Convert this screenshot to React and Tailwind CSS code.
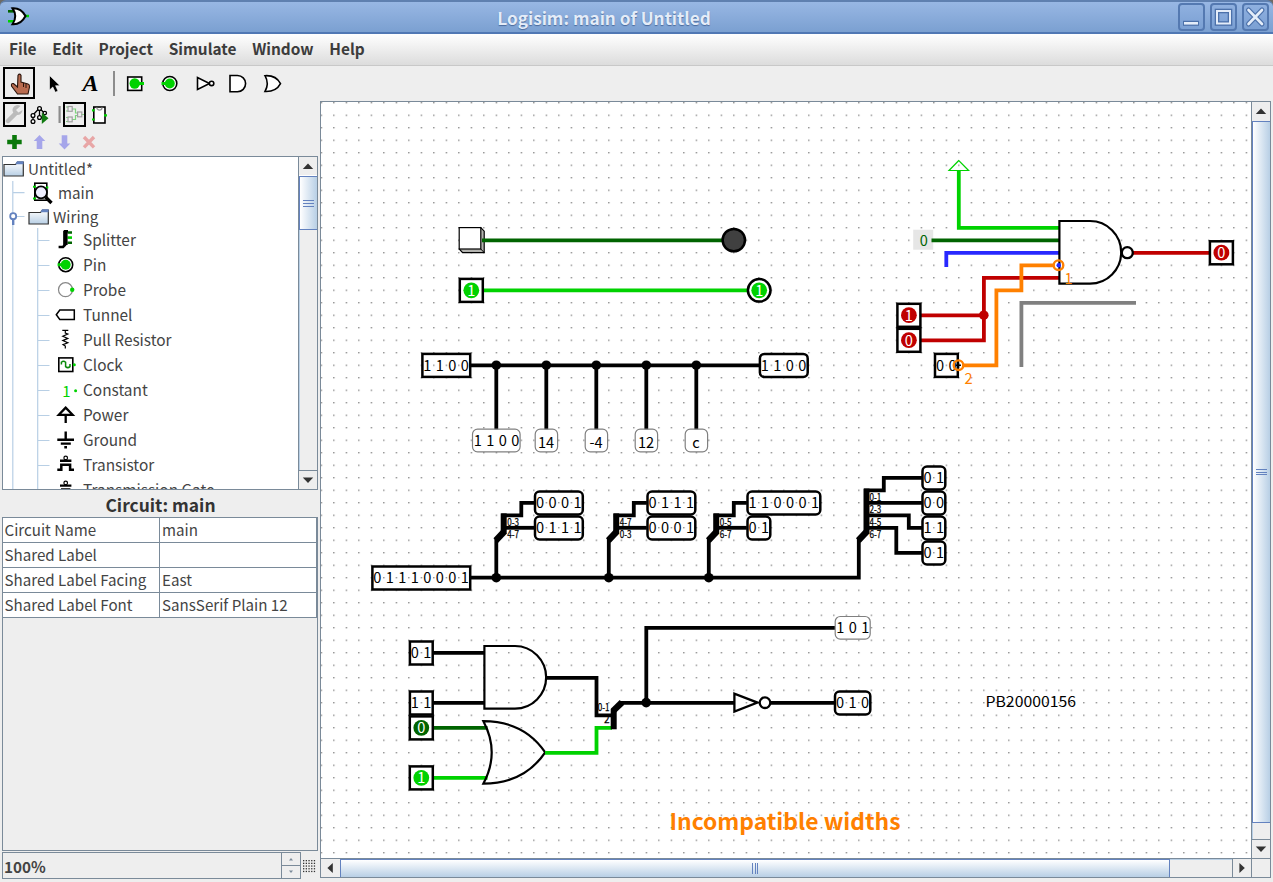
import React from 'react';

const G = '#00d200';
const DG = '#006400';
const RED = '#c00000';
const ORANGE = '#ff8000';

/* ---------- circuit primitives ---------- */

function Wire({ d, c = '#000', w = 3.8 }) {
  return <path d={d} fill="none" stroke={c} strokeWidth={w} strokeLinejoin="miter" />;
}

function Dot({ x, y, c = '#000' }) {
  return <circle cx={x} cy={y} r={4.8} fill={c} />;
}

function Bits({ x, y, v }) {
  return v.split('').map((ch, i) => (
    <text key={i} x={x + i * 12.5} y={y + 5.3} fontSize="14.6" textAnchor="middle">{ch}</text>
  ));
}

/* Multi-bit pin: square corners for inputs, rounded for outputs. */
function Bus({ x, y, v, out }) {
  return (
    <g>
      <rect x={x + 1.2} y={y - 11.3} width={v.length * 12.5 - 2.2} height={23} rx={out ? 4.5 : 0} fill="none" stroke="#000" strokeWidth="2.5" />
      <Bits x={x + 6.2} y={y} v={v} />
    </g>
  );
}

function Pin({ x, y, v, c, out }) {
  return (
    <g>
      {out ? (
        <circle cx={x} cy={y} r="11.3" fill="none" stroke="#000" strokeWidth="2.5" />
      ) : (
        <rect x={x - 11.5} y={y - 11.4} width="23" height="23" fill="none" stroke="#000" strokeWidth="2.5" />
      )}
      <circle cx={x} cy={y} r="7.9" fill={c} />
      <text x={x} y={y + 5.4} fontSize="14.6" textAnchor="middle" fill="#fff">{v}</text>
    </g>
  );
}

function Probe({ x, y, w, children }) {
  return (
    <g>
      <rect x={x} y={y} width={w} height="22.6" rx="5" fill="#fff" stroke="#808080" strokeWidth="1.2" />
      {children}
    </g>
  );
}

function Tiny({ x, y, children }) {
  return <text x={x} y={y} fontSize="10" textLength={children.length > 1 ? 11.8 : undefined} lengthAdjust="spacingAndGlyphs" stroke="#000" strokeWidth=".25">{children}</text>;
}

function TwoWay({ x, labels }) {
  return (
    <g>
      <Wire d={`M${x} 577.7V538.5`} />
      <Wire d={`M${x - 0.5} 540.5L${x + 8} 531.5`} w={6.5} />
      <Wire d={`M${x + 7.4} 534V513.4`} w={6} />
      <Wire d={`M${x + 5} 515.3H${x + 25}V502.8H${x + 38}`} />
      <Wire d={`M${x + 8} 527.8H${x + 38}`} />
      <Tiny x={x + 11} y={525.8}>{labels[0]}</Tiny>
      <Tiny x={x + 11} y={538.4}>{labels[1]}</Tiny>
      <Dot x={x} y={577.7} />
    </g>
  );
}

function Circuit() {
  return (
    <svg className="block h-[756px] w-[930px]" viewBox="321 102 930 756" fontFamily='"Noto Sans CJK SC","Noto Sans",sans-serif'>
      <defs>
        <pattern id="grid" patternUnits="userSpaceOnUse" x="320.7" y="102.1" width="12.5" height="12.5">
          <rect width="1.3" height="1.3" fill="#777" />
        </pattern>
      </defs>
      <rect x="321" y="102" width="930" height="757" fill="#fff" />
      <rect x="321" y="102" width="930" height="757" fill="url(#grid)" />

      {/* button to LED, pin to pin */}
      <path d="M480.8 227.6l3.4 3.6v21.4h-21.6l-3.4-3.6z" fill="#b4b4b0" stroke="#000" strokeWidth="1.2" />
      <path d="M480.8 249l3.4 3.6" stroke="#000" />
      <rect x="459.2" y="227.6" width="21.6" height="21.4" fill="#fff" stroke="#000" strokeWidth="1.2" />
      <Wire d="M482 240.3H723" c={DG} />
      <circle cx="733.8" cy="240.1" r="11.2" fill="#404040" stroke="#000" strokeWidth="2.5" />
      <Wire d="M482 290.4H748" c={G} />
      <Pin x={471.3} y={290.3} v="1" c={G} />
      <Pin x={759.2} y={290.3} v="1" c={G} out />

      {/* probe row */}
      <Wire d="M470 365.4H759" />
      {[496.3, 546.3, 596.3, 646.3, 696.3].map((x) => (
        <g key={x}>
          <Wire d={`M${x} 365.3V430`} />
          <Dot x={x} y={365.2} />
        </g>
      ))}
      <Bus x={421.2} y={365.2} v="1100" />
      <Bus x={758.7} y={365.2} v="1100" out />
      <Probe x={472.5} y={429.2} w={47.6}><Bits x={477.8} y={440.2} v="1100" /></Probe>
      {[['14', 535.2], ['-4', 585.2], ['12', 635.2], ['c', 685.2]].map(([t, x]) => (
        <Probe key={t} x={x} y={429.2} w={22.4}>
          <text x={x + 10.8} y="448" fontSize="14.6" textAnchor="middle">{t}</text>
        </Probe>
      ))}

      {/* splitters */}
      <Wire d="M470 577.7H858.8V538.5" />
      <Bus x={371.2} y={577.8} v="01110001" />
      <TwoWay x={496.3} labels={['0-3', '4-7']} />
      <TwoWay x={608.8} labels={['4-7', '0-3']} />
      <TwoWay x={708.8} labels={['0-5', '6-7']} />
      <Bus x={533.8} y={502.8} v="0001" out />
      <Bus x={533.8} y={527.8} v="0111" out />
      <Bus x={646.3} y={502.8} v="0111" out />
      <Bus x={646.3} y={527.8} v="0001" out />
      <Bus x={746.3} y={502.8} v="110001" out />
      <Bus x={746.3} y={527.8} v="01" out />
      <Wire d="M858.3 540.5L866.8 531.5" w={6.5} />
      <Wire d="M866.5 534V488.6" w={6} />
      <Wire d="M864 490.4H883.8V477.8H922" />
      <Wire d="M867 502.8H922" />
      <Wire d="M867 515.4H908.8V527.8H922" />
      <Wire d="M867 527.8H896.3V552.9H922" />
      <Tiny x={869.5} y={500.8}>0-1</Tiny>
      <Tiny x={869.5} y={513.3}>2-3</Tiny>
      <Tiny x={869.5} y={525.8}>4-5</Tiny>
      <Tiny x={869.5} y={538.3}>6-7</Tiny>
      <Bus x={921.3} y={477.8} v="01" out />
      <Bus x={921.3} y={502.8} v="00" out />
      <Bus x={921.3} y={527.8} v="11" out />
      <Bus x={921.3} y={552.8} v="01" out />

      {/* AND / OR / NOT */}
      <Wire d="M432 652.8H484M432 702.8H484" />
      <Wire d="M432 727.8H487.5" c={DG} />
      <Wire d="M432 777.8H487.5" c={G} />
      <Bus x={408.7} y={652.8} v="01" />
      <Bus x={408.7} y={702.8} v="11" />
      <Pin x={421.3} y={727.8} v="0" c={DG} />
      <Pin x={421.3} y={777.8} v="1" c={G} />
      <path d="M484.4 646H515A31.2 31.3 0 0 1 515 708.6H484.4Z" fill="none" stroke="#000" strokeWidth="2.2" />
      <path d="M483.4 721.2Q524 721.2 545.2 752.4Q524 783.6 483.4 783.6Q500 752.4 483.4 721.2Z" fill="none" stroke="#000" strokeWidth="2.2" />
      <Wire d="M546 677.8H596.5V715.4H612" />
      <Wire d="M545 752.8H596.5V727.8H612" c={G} />
      <Wire d="M613.7 729.3V709" w={6} />
      <Wire d="M613 711L622 702.3" w={6.5} />
      <Wire d="M620 702.8H734M646.3 702.8V627.8H835M771 702.8H835" />
      <Dot x={646.2} y={702.6} />
      <Tiny x={597.8} y={711}>0-1</Tiny>
      <Tiny x={604} y={723}>2</Tiny>
      <path d="M734.4 693.6V711.6L757.5 702.6Z" fill="none" stroke="#000" strokeWidth="2.3" />
      <circle cx="765" cy="702.7" r="5.3" fill="#fff" stroke="#000" strokeWidth="2.3" />
      <Bus x={833.8} y={702.8} v="010" out />
      <Probe x={835.2} y={616.5} w={35}><Bits x={840.3} y={628} v="101" /></Probe>

      {/* NAND with mixed inputs */}
      <path d="M958.8 160.5L949 170.5H968.6Z" fill="none" stroke={G} strokeWidth="1.2" />
      <Wire d="M958.8 170.5V227.8H1060" c={G} />
      <rect x="913.2" y="229.7" width="20" height="20" fill="#e6e6e6" />
      <text x="923.7" y="245.7" fontSize="14.6" textAnchor="middle" fill={DG}>0</text>
      <Wire d="M931.5 240.3H1060" c={DG} />
      <Wire d="M946.3 267V252.8H1060" c="#2828ff" />
      <Wire d="M1060 277.8H983.9V340.4H920M920 315.4H984" c={RED} />
      <Dot x={983.8} y={315.2} c={RED} />
      <Wire d="M1132 252.9H1210" c={RED} />
      <Pin x={908.9} y={315.2} v="1" c={RED} />
      <Pin x={908.9} y={340.2} v="0" c={RED} />
      <Pin x={1221.4} y={252.7} v="0" c={RED} />
      <path d="M1059.4 221H1090A31.2 31.3 0 0 1 1090 283.6H1059.4Z" fill="none" stroke="#000" strokeWidth="2.2" />
      <circle cx="1127.3" cy="252.7" r="5.5" fill="#fff" stroke="#000" strokeWidth="2.3" />
      <Bus x={933.8} y={365.2} v="00" />
      <Wire d="M1054 265.3H1021.4V290.4H996.4V365.4H963" c={ORANGE} />
      <circle cx="1058.7" cy="265.2" r="2.2" fill="#2828ff" />
      <circle cx="1058.5" cy="265.2" r="4.8" fill="none" stroke={ORANGE} strokeWidth="2.4" />
      <path d="M958.5 362.5V368M956 365.3H961" stroke="#000" strokeWidth="1.6" />
      <circle cx="958.5" cy="365.2" r="4.8" fill="none" stroke={ORANGE} strokeWidth="2.4" />
      <text x="1068.5" y="284" fontSize="14.6" textAnchor="middle" fill={ORANGE}>1</text>
      <text x="968.5" y="384.4" fontSize="14.6" textAnchor="middle" fill={ORANGE}>2</text>
      <Wire d="M1021.4 367V302.8H1136" c="#808080" />

      <text x="985.5" y="707" fontSize="14.6" textLength="90.5" lengthAdjust="spacingAndGlyphs">PB20000156</text>
      <text x="669.5" y="830" fontSize="22.2" fontWeight="700" fill={ORANGE} textLength="231" lengthAdjust="spacingAndGlyphs">Incompatible widths</text>
    </svg>
  );
}

/* ---------- chrome ---------- */

function WinButton({ children }) {
  return (
    <div className="h-[28px] w-[27px] rounded-[4px] border-2 border-[#5479b1] bg-gradient-to-b from-[#8fb0df] to-[#7ba0d3]">
      <svg viewBox="0 0 23 24" className="block h-[24px] w-[23px]">{children}</svg>
    </div>
  );
}

function TitleBar() {
  return (
    <div className="bg-[#6d6a66]">
      <div className="flex h-[34px] items-center rounded-t-[6px] border-t-2 border-b-2 border-t-[#5f80b0] border-b-[#5078b4] bg-gradient-to-b from-[#98b7e4] to-[#7ba0d1]">
        <svg viewBox="4 4 30 28" className="h-[28px] w-[30px] shrink-0 ml-1">
          <path d="M8 12.3H15" stroke={DG} strokeWidth="2.6" />
          <path d="M8 22.3H15M25 17H29" stroke={G} strokeWidth="2.6" />
          <path d="M12.5 9.3Q21 8.8 25.5 17Q21 25.8 12.5 25.3Q18 17 12.5 9.3Z" fill="#fff" stroke="#000" strokeWidth="2" />
        </svg>
        <div className="ml-[34px] w-[1072px] pt-px text-center text-[17.2px] font-bold text-[#e4ecf8] [text-shadow:0_1px_1px_#4a6a9c]">Logisim: main of Untitled</div>
        <div className="ml-auto mr-[4px] flex gap-[5px]">
          <WinButton><path d="M3 18.3H19" stroke="#4c71aa" strokeWidth="5" /><path d="M4 18.3H18" stroke="#e4edf9" strokeWidth="2.6" /></WinButton>
          <WinButton><rect x="5" y="6" width="13" height="12.5" fill="none" stroke="#4c71aa" strokeWidth="4.6" /><rect x="5" y="6" width="13" height="12.5" fill="none" stroke="#e4edf9" strokeWidth="2" /></WinButton>
          <WinButton><path d="M4.5 5L18 19M18 5L4.5 19" stroke="#4c71aa" strokeWidth="5" strokeLinecap="round" /><path d="M4.5 5L18 19M18 5L4.5 19" stroke="#e4edf9" strokeWidth="2.6" strokeLinecap="round" /></WinButton>
        </div>
      </div>
    </div>
  );
}

function MenuBar() {
  return (
    <div className="flex h-8 items-center gap-[15.8px] border-b border-[#c8c8c8] bg-gradient-to-b from-white to-[#dcdcdc] pl-[9px] pb-[1px] text-[15.4px] font-bold text-[#3c3c3c]">
      {['File', 'Edit', 'Project', 'Simulate', 'Window', 'Help'].map((m) => <span key={m}>{m}</span>)}
    </div>
  );
}

function Toolbar() {
  return (
    <div className="flex h-[35px] items-center pb-px pl-[3px]">
      <div className="h-[32px] w-[32px] border-2 border-black">
        <svg viewBox="5 69 28 28" className="block h-[28px] w-[28px]">
          <path d="M18 75.2Q19.5 73 21 75.2V82L28 84Q29.8 84.6 29.5 87L28 94H17.5L11.5 86Q11 83 13.5 83.6L17.5 87Z" fill="#b96c50" stroke="#2a140c" strokeWidth="1.1" />
          <path d="M23.5 83V87M26 84V88" stroke="#2a140c" strokeWidth="1" />
        </svg>
      </div>
      <svg viewBox="35 67 36 33" className="h-[33px] w-[36px]">
        <path d="M49.5 75.5V90L52.8 87L55.3 92.3L58 91L55.6 85.7H60Z" fill="#000" stroke="#fff" strokeWidth=".6" />
      </svg>
      <div className="w-[38px] pl-px text-center font-['Liberation_Serif',serif] text-[24px] leading-[33px] font-bold italic text-black">A</div>
      <div className="mx-1 h-[25px] w-[2px] bg-[#8c8c8c]" />
      <svg viewBox="120 67 172 33" className="ml-px h-[33px] w-[172px]" fill="none" stroke="#000" strokeWidth="1.6">
        <rect x="127.7" y="77" width="14" height="13.4" fill="#fff" />
        <circle cx="134.7" cy="83.5" r="5.2" fill={G} stroke="none" />
        <path d="M138 83.5H144" stroke={G} strokeWidth="3" />
        <circle cx="169.8" cy="83.5" r="7" fill="#fff" />
        <circle cx="169.8" cy="83.5" r="5" fill={G} stroke="none" />
        <path d="M161.5 83.5H167" stroke={G} strokeWidth="3" />
        <path d="M197.5 77.5V89.5L209.5 83.5Z" fill="#fff" />
        <circle cx="211.6" cy="83.4" r="2.2" fill="#fff" />
        <path d="M230 75.5H237.5A8 8 0 0 1 237.5 91.7H230Z" fill="#fff" />
        <path d="M265 75.7Q276 75 280.5 83.6Q276 92 265 91.5Q269.5 83.6 265 75.7Z" fill="#fff" />
      </svg>
    </div>
  );
}

function ExplorerTools() {
  return (
    <>
      <div className="flex h-[26px] items-start pl-[3px]">
        <div className="h-[25px] w-[23px] border-2 border-black">
          <svg viewBox="5 104 19 21" className="block h-[21px] w-[19px]">
            <path d="M8 121L15.5 113.5" stroke="#bcbcbc" strokeWidth="4.5" strokeLinecap="round" />
            <path d="M20.5 106A5 5 0 1 0 22.5 110L18.5 112.5L16 110Z" fill="#bcbcbc" />
          </svg>
        </div>
        <svg viewBox="26 102 37 25" className="h-[25px] w-[37px]">
          <g fill="#fff" stroke="#000" strokeWidth="1.3">
            <path d="M33 115L39.5 108L45.5 114.5M33 115V121M39.5 108V117" fill="none" />
            <circle cx="39.5" cy="108.5" r="1.9" /><circle cx="33" cy="115.5" r="1.9" /><circle cx="33" cy="121.5" r="1.9" /><circle cx="39.5" cy="117.5" r="1.9" /><circle cx="44.8" cy="113" r="1.7" />
          </g>
          <path d="M41.8 112.5V124L48.5 118.2Z" fill="#107a10" />
          <path d="M59.6 106V123" stroke="#8c8c8c" strokeWidth="2.2" />
        </svg>
        <div className="h-[25px] w-[23px] border-2 border-black">
          <svg viewBox="65 104 19 21" className="block h-[21px] w-[19px]" fill="none" strokeWidth="1.2">
            <path d="M66 107H68M72 109H75.5V113H78M72 119.5H75.5V115.5H78M66 111H68M66 117.5H68M66 121.5H68M81.5 114.5H84" stroke="#7fd67f" />
            <rect x="68" y="106.5" width="4.2" height="4.8" stroke="#a0a0a0" /><rect x="68" y="117" width="4.2" height="4.8" stroke="#a0a0a0" /><rect x="77.6" y="112" width="4.2" height="4.8" stroke="#a0a0a0" />
          </svg>
        </div>
        <svg viewBox="86 102 24 25" className="h-[25px] w-[24px]">
          <rect x="93.8" y="107" width="11.2" height="16" fill="#fff" stroke="#000" strokeWidth="1.6" />
          <path d="M96.8 107.5a2.6 2.6 0 0 0 5.2 0" fill="none" stroke="#999" strokeWidth="1.4" />
          <path d="M92 110.3H94.6M92 119.5H94.6M104 115.3H107" stroke={G} strokeWidth="2.2" />
        </svg>
      </div>
      <svg viewBox="0 128 110 28" className="block h-[28px] w-[110px]">
        <path d="M12.2 135H16.8V139.8H21.7V144.3H16.8V149H12.2V144.3H7.2V139.8H12.2Z" fill="#0a780a" />
        <path d="M39.5 135L45.3 141H42.3V149H36.7V141H33.7Z" fill="#a6a6ea" />
        <path d="M64.5 149.4L70.3 143.4H67.3V135.2H61.7V143.4H58.7Z" fill="#a6a6ea" />
        <path d="M84 137L94 147.4M94 137L84 147.4" stroke="#e8a6a6" strokeWidth="3.4" />
      </svg>
    </>
  );
}

function Arrow({ dir }) {
  const d = { up: 'M3.8 12L9 6.6L14.2 12Z', down: 'M3.8 6.6L9 12L14.2 6.6Z', left: 'M11.8 4L6.4 9L11.8 14Z', right: 'M6.4 4L11.8 9L6.4 14Z' }[dir];
  return <svg viewBox="0 0 18 18" className="block h-[18px] w-[18px] shrink-0 bg-[#eeeeee]"><path d={d} fill="#333" /></svg>;
}

const ICONS = {
  Splitter: <><path d="M13.5 4.5H18M13.5 14.8H18" stroke={DG} strokeWidth="2.6" /><path d="M13.5 9.6H18" stroke={G} strokeWidth="2.6" /><path d="M14 3.2H11V17L9 19H4.6" fill="none" stroke="#000" strokeWidth="2.6" /><path d="M11.4 3V17" stroke="#000" strokeWidth="4.4" /></>,
  Pin: <><circle cx="11.7" cy="11.7" r="7" fill="#fff" stroke="#000" strokeWidth="1.6" /><circle cx="11.7" cy="11.7" r="5" fill={G} /><path d="M3.6 11.7H9" stroke={G} strokeWidth="3" /></>,
  Probe: <><circle cx="11.5" cy="11.7" r="7" fill="#fff" stroke="#888" strokeWidth="1.2" /><circle cx="18.2" cy="11.7" r="2.2" fill={G} /></>,
  Tunnel: <path d="M2.3 11.7L5.8 7H20.3V16.4H5.8Z" fill="#fff" stroke="#000" strokeWidth="1.5" />,
  'Pull Resistor': <path d="M8.3 2.4H14.3M11.3 2.4V5L13.8 6L8.8 8.2L13.8 10.4L8.8 12.6L13.8 14.8L9 16.6L11.3 18V20.6" fill="none" stroke="#000" strokeWidth="1.2" />,
  Clock: <><rect x="4.8" y="4.9" width="14" height="13.6" fill="#fff" stroke="#000" strokeWidth="1.6" /><path d="M7.4 11.5V9.2Q9.5 7.4 11.6 9.2V13.6Q13.8 15.6 16 13.6V11" fill="none" stroke="#0a8a0a" strokeWidth="1.5" /><circle cx="20.3" cy="11.7" r="1.5" fill={G} /></>,
  Constant: <><text x="12.3" y="18.6" fontSize="15" textAnchor="middle" fill={G}>1</text><circle cx="21.6" cy="12.8" r="1.5" fill={G} /></>,
  Power: <path d="M11.7 20V12M11.7 4.6L4.8 11.8H18.6Z" fill="none" stroke="#000" strokeWidth="2.3" />,
  Ground: <path d="M11.7 3.4V11.6M3.3 11.8H20M6.8 15.6H16.8M10.3 19.2H13" fill="none" stroke="#000" strokeWidth="2.4" />,
  Transistor: <><circle cx="11.7" cy="4.9" r="1.8" fill="#fff" stroke="#000" strokeWidth="1.2" /><path d="M6 7.7H17.4M3.3 16.8H7.3V11.8H16.1V16.8H20" fill="none" stroke="#000" strokeWidth="2.5" /></>,
  'Transmission Gate': <><circle cx="11.7" cy="4.9" r="1.8" fill="#fff" stroke="#000" strokeWidth="1.2" /><path d="M6 7.7H17.4M7 11.5H16.4" fill="none" stroke="#000" strokeWidth="2.3" /></>,
};

function Folder() {
  return (
    <svg viewBox="0 0 22 18" className="h-[18px] w-[22px] shrink-0">
      <defs><linearGradient id="fold" x2="0" y2="1"><stop offset="0" stopColor="#fff" /><stop offset="1" stopColor="#b8cfe5" /></linearGradient></defs>
      <path d="M1 4.5H12.5L14.5 2H20.3V16H1Z" fill="url(#fold)" stroke="#333" strokeWidth="1.2" />
      <path d="M12.5 4.3L14 1.2H20.5V4.3Z" fill="#6382bf" />
    </svg>
  );
}

function Tree() {
  return (
    <div className="ml-[2px] flex h-[334px] w-[316px] border border-[#7a8a99] bg-white">
      <div className="h-full w-[295px] overflow-hidden text-[15.2px] text-[#444]">
        <div className="flex h-6 items-center"><Folder /><span className="ml-[3px] pb-[2px]">Untitled*</span></div>
        <div className="flex h-6 items-center">
          <svg viewBox="3 181 55 24" className="h-[24px] w-[55px] shrink-0">
            <path d="M12.8 180V205M12.8 192.7H24.5" stroke="#b8cfe5" strokeWidth="1.2" fill="none" />
            <rect x="34.8" y="183.2" width="12" height="17" fill="#fff" stroke="#000" strokeWidth="1.6" />
            <path d="M33 186.7H36M33 198.5H36M46 187.5H48.3" stroke={G} strokeWidth="2" />
            <circle cx="41" cy="192.3" r="6" fill="#eef" stroke="#000" strokeWidth="1.8" />
            <path d="M45.5 197L51.5 203" stroke="#000" strokeWidth="3.4" />
          </svg>
          <span className="pb-[2px]">main</span>
        </div>
        <div className="flex h-[23px] items-center">
          <svg viewBox="3 205 25 23" className="h-[23px] w-[25px] shrink-0">
            <path d="M12.8 205V228M16 216.5H24.5" stroke="#b8cfe5" strokeWidth="1.2" fill="none" />
            <path d="M13.2 219V225" stroke="#6382bf" strokeWidth="2.4" />
            <circle cx="13.2" cy="216.2" r="3" fill="#fff" stroke="#6382bf" strokeWidth="1.8" />
          </svg>
          <Folder /><span className="ml-[3px]">Wiring</span>
        </div>
        {Object.keys(ICONS).map((n) => (
          <div key={n} className="flex h-[25px] items-center">
            <svg viewBox="3 0 51 25" className="h-[25px] w-[51px] shrink-0">
              <path d="M12.8 0V25M37.7 0V25M37.7 12.5H49.5" stroke="#b8cfe5" strokeWidth="1.2" />
            </svg>
            <svg viewBox="0 0 24 25" className="h-[25px] w-[24px] shrink-0">{ICONS[n]}</svg>
            <span className="ml-[5px] whitespace-nowrap pb-[1px] text-[15.4px]">{n}</span>
          </div>
        ))}
      </div>
      <div className="flex w-[19px] flex-col border-l border-[#7a8a99]">
        <Arrow dir="up" />
        <div className="mt-px flex h-[54px] flex-col items-center justify-center gap-[2px] border-y border-[#6382bf] border-l border-l-[#6382bf] bg-gradient-to-r from-white to-[#b8cfe5]">
          {[0, 1, 2].map((i) => <div key={i} className="h-px w-[11px] bg-[#6382bf]" />)}
        </div>
        <div className="flex-1 border-l border-[#b8cfe5] bg-[#eeeeee]" />
        <div className="border-t border-[#7a8a99]"><Arrow dir="down" /></div>
      </div>
    </div>
  );
}

function Attributes() {
  const rows = [['Circuit Name', 'main'], ['Shared Label', ''], ['Shared Label Facing', 'East'], ['Shared Label Font', 'SansSerif Plain 12']];
  return (
    <>
      <div className="flex h-[27px] items-center justify-center pt-[4px] pl-[1px] text-[17.4px] font-bold text-[#333]">Circuit: main</div>
      <div className="ml-[2px] h-[334px] w-[316px] border border-[#7a8a99] text-[15.15px] text-[#444]">
        {rows.map(([a, b]) => (
          <div key={a} className="flex h-[25px] border-b border-[#7a8a99] bg-white leading-[23px]">
            <div className="w-[157px] whitespace-nowrap border-r border-[#7a8a99] pl-[1.5px]">{a}</div>
            <div className="flex-1 whitespace-nowrap border-r border-[#7a8a99] pl-[2px]">{b}</div>
          </div>
        ))}
      </div>
    </>
  );
}

function ZoomBar() {
  return (
    <div className="mt-[1px] ml-[2px] flex h-[27px] items-center">
      <div className="flex h-[27px] w-[299px] border border-[#7a8a99]">
        <div className="flex-1 pl-[1px] text-[15.3px] leading-[26px] font-bold text-[#444]">100%</div>
        <div className="flex w-[19px] flex-col border-l border-[#7a8a99]">
          <svg viewBox="0 0 18 12" className="h-[12px] w-[18px]"><path d="M7 7.5L9 5L11 7.5Z" fill="#7a8a99" /></svg>
          <div className="h-px bg-[#7a8a99]" />
          <svg viewBox="0 0 18 12" className="h-[12px] w-[18px]"><path d="M7 4.5L9 7L11 4.5Z" fill="#7a8a99" /></svg>
        </div>
      </div>
      <svg viewBox="0 0 14 16" className="ml-[1px] h-[16px] w-[14px]">
        {[0, 1, 2, 3, 4].map((r) => [0, 1, 2, 3, 4].map((c) => <rect key={`${r}-${c}`} x={1 + c * 2.7} y={2 + r * 2.7} width="1.3" height="1.3" fill="#333" />))}
      </svg>
    </div>
  );
}

function CanvasPane() {
  return (
    <div className="h-[777px] w-[951px] border border-[#7a8a99]">
      <div className="flex h-[756px]">
        <Circuit />
        <div className="flex w-[19px] flex-col border-l border-[#7a8a99]">
          <Arrow dir="up" />
          <div className="mt-px flex h-[702px] flex-col items-center justify-center gap-[1.5px] border-y border-l border-[#6382bf] bg-gradient-to-r from-white to-[#b8cfe5]">
            {[0, 1, 2].map((i) => <div key={i} className="h-px w-[11px] bg-[#6382bf]" />)}
          </div>
          <div className="flex-1 border-l border-[#b8cfe5] bg-[#eeeeee]" />
          <div className="border-t border-[#7a8a99]"><Arrow dir="down" /></div>
        </div>
      </div>
      <div className="flex h-[19px] border-t border-[#7a8a99]">
        <Arrow dir="left" />
        <div className="ml-px flex w-[830px] items-center justify-center gap-[1.5px] border-x border-t border-[#6382bf] bg-gradient-to-b from-white to-[#b8cfe5]">
          {[0, 1, 2].map((i) => <div key={i} className="h-[11px] w-px bg-[#6382bf]" />)}
        </div>
        <div className="flex-1 border-t border-[#b8cfe5] bg-[#eeeeee]" />
        <div className="border-l border-[#7a8a99]"><Arrow dir="right" /></div>
        <div className="w-[19px] border-l border-[#7a8a99] bg-[#eeeeee]" />
      </div>
    </div>
  );
}

export default function App() {
  return (
    <div className="h-[882px] w-[1273px] overflow-hidden bg-[#eeeeee] font-['Noto_Sans_CJK_SC','Noto_Sans',sans-serif]">
      <TitleBar />
      <MenuBar />
      <Toolbar />
      <div className="flex">
        <div className="w-[320px]">
          <div className="pt-[1px]"><ExplorerTools /></div>
          <Tree />
          <Attributes />
          <ZoomBar />
        </div>
        <CanvasPane />
      </div>
    </div>
  );
}
